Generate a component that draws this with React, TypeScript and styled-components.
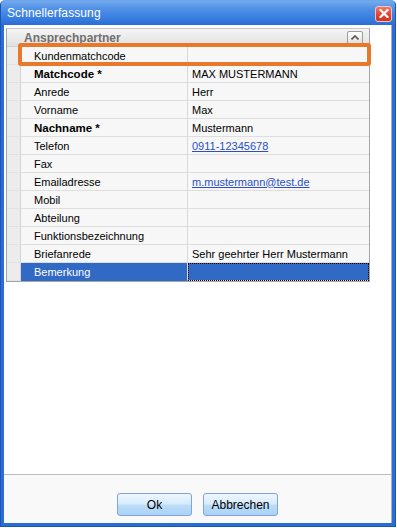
import styled, { createGlobalStyle } from 'styled-components'

const GlobalStyle = createGlobalStyle`
    html, body {
        margin: 0;
        padding: 0;
        background: #ffffff;
    }
    body {
        font-family: 'Liberation Sans', Arial, sans-serif;
    }
`

type Row = {
    label: string
    value?: string
    bold?: boolean
    link?: boolean
    selected?: boolean
}

const rows: Row[] = [
    { label: 'Kundenmatchcode' },
    { label: 'Matchcode *', value: 'MAX MUSTERMANN', bold: true },
    { label: 'Anrede', value: 'Herr' },
    { label: 'Vorname', value: 'Max' },
    { label: 'Nachname *', value: 'Mustermann', bold: true },
    { label: 'Telefon', value: '0911-12345678', link: true },
    { label: 'Fax' },
    { label: 'Emailadresse', value: 'm.mustermann@test.de', link: true },
    { label: 'Mobil' },
    { label: 'Abteilung' },
    { label: 'Funktionsbezeichnung' },
    { label: 'Briefanrede', value: 'Sehr geehrter Herr Mustermann' },
    { label: 'Bemerkung', selected: true },
]

export default function App() {
    return (
        <>
            <GlobalStyle />
            <StyledWindow>
                <StyledTitleBar>
                    <StyledTitle>Schnellerfassung</StyledTitle>
                    <StyledClose>
                        <svg width="10" height="9" viewBox="0 0 10 9">
                            <path d="M1.5 1 L8.5 8 M8.5 1 L1.5 8" stroke="#fff" strokeWidth="2.2" strokeLinecap="square" />
                        </svg>
                    </StyledClose>
                </StyledTitleBar>
                <StyledClient>
                    <StyledContent>
                        <StyledGrid>
                            <StyledGroupHeader>
                                <StyledGroupTitle>Ansprechpartner</StyledGroupTitle>
                                <StyledCollapse>
                                    <svg width="8" height="5" viewBox="0 0 8 5">
                                        <path d="M0.5 4.5 L4 1 L7.5 4.5" stroke="#555" strokeWidth="1.6" fill="none" />
                                    </svg>
                                </StyledCollapse>
                            </StyledGroupHeader>
                            {rows.map((row) => (
                                <StyledRow key={row.label}>
                                    <StyledGutter />
                                    <StyledLabel $bold={row.bold} $selected={row.selected}>{row.label}</StyledLabel>
                                    <StyledValue $selected={row.selected}>
                                        {row.link ? <StyledLink>{row.value}</StyledLink> : row.value}
                                    </StyledValue>
                                </StyledRow>
                            ))}
                            <StyledHighlight />
                        </StyledGrid>
                    </StyledContent>
                    <StyledFooter>
                        <StyledButton>Ok</StyledButton>
                        <StyledButton>Abbrechen</StyledButton>
                    </StyledFooter>
                </StyledClient>
            </StyledWindow>
        </>
    )
}

const StyledWindow = styled.div`
    width: 396px;
    height: 527px;
    box-sizing: border-box;
    display: flex;
    flex-direction: column;
    background: #2a6dd4;
    border: 1px solid #1c56b5;
    border-top-color: #6ea6ec;
    border-radius: 5px 5px 0 0;
`

const StyledTitleBar = styled.div`
    height: 23px;
    flex: none;
    display: flex;
    align-items: center;
    justify-content: space-between;
    padding: 0 3px 0 6px;
    background: linear-gradient(to bottom, #73aaee 0%, #4f90e6 35%, #3a80e0 70%, #2c70d6 100%);
    border-radius: 4px 4px 0 0;
`

const StyledTitle = styled.div`
    color: #fff;
    font-size: 12px;
    letter-spacing: 0.1px;
`

const StyledClose = styled.div`
    width: 15px;
    height: 14px;
    margin-top: 2px;
    display: flex;
    align-items: center;
    justify-content: center;
    border: 1px solid #f3c3bd;
    border-radius: 3px;
    background: linear-gradient(to bottom, #ef7a6e 0%, #e2483a 50%, #d4321f 100%);
`

const StyledClient = styled.div`
    flex: 1;
    display: flex;
    flex-direction: column;
    margin: 1px 3px 3px 3px;
    background: #fff;
    border-right: 1px solid #b0b0b0;
`

const StyledContent = styled.div`
    flex: 1;
    padding: 3px 21px 0 2px;
`

const StyledGrid = styled.div`
    position: relative;
    border: 1px solid #a5a5a5;
    border-top-color: #c8c8c8;
    background: #f7f7f7;
`

const StyledGroupHeader = styled.div`
    height: 17px;
    display: flex;
    align-items: center;
    justify-content: space-between;
    padding: 0 6px 0 17px;
    background: linear-gradient(to bottom, #f4f4f4 0%, #e9e9e9 60%, #e0e0e0 100%);
    border-bottom: 1px solid #d0d0d0;
`

const StyledGroupTitle = styled.div`
    color: #707070;
    font-size: 12px;
    font-weight: bold;
`

const StyledCollapse = styled.div`
    width: 14px;
    height: 12px;
    display: flex;
    align-items: center;
    justify-content: center;
    border: 1px solid #9c9c9c;
    border-radius: 2px;
    background: linear-gradient(to bottom, #ffffff, #dedede);
`

const StyledRow = styled.div`
    display: grid;
    grid-template-columns: 14px 167px 1fr;
    height: 18px;
`

const StyledGutter = styled.div`
    background: #ececec;
    border-right: 1px solid #d4d4d4;
    border-bottom: 1px solid #e2e2e2;
`

const StyledLabel = styled.div<{ $bold?: boolean; $selected?: boolean }>`
    display: flex;
    align-items: center;
    padding-left: 13px;
    font-size: ${(p) => (p.$bold ? '11.5px' : '11px')};
    font-weight: ${(p) => (p.$bold ? 'bold' : 'normal')};
    color: ${(p) => (p.$selected ? '#fff' : '#000')};
    background: ${(p) => (p.$selected ? '#316ac5' : '#f7f7f7')};
    border-right: 1px solid #dadada;
    border-bottom: 1px solid ${(p) => (p.$selected ? '#316ac5' : '#dedede')};
    white-space: nowrap;
`

const StyledValue = styled.div<{ $selected?: boolean }>`
    display: flex;
    align-items: center;
    padding-left: 4px;
    font-size: 11px;
    color: #000;
    background: ${(p) => (p.$selected ? '#316ac5' : '#f7f7f7')};
    border-bottom: 1px solid #dedede;
    outline: ${(p) => (p.$selected ? '1px dotted #000' : 'none')};
    outline-offset: -1px;
    white-space: nowrap;
`

const StyledLink = styled.span`
    color: #2b4fc6;
    text-decoration: underline;
`

const StyledHighlight = styled.div`
    position: absolute;
    left: 11px;
    top: 14px;
    width: 353px;
    height: 23px;
    box-sizing: border-box;
    border: 4px solid #e8782a;
    border-radius: 3px;
    pointer-events: none;
`

const StyledFooter = styled.div`
    height: 49px;
    flex: none;
    display: flex;
    align-items: flex-end;
    justify-content: center;
    gap: 11px;
    padding-bottom: 7px;
    box-sizing: border-box;
    background: #f9f9f9;
    border-top: 1px solid #bdbdbd;
`

const StyledButton = styled.button`
    width: 75px;
    height: 23px;
    padding: 0;
    font-family: 'Liberation Sans', Arial, sans-serif;
    font-size: 12px;
    color: #000;
    border: 1px solid #7fa6d6;
    border-radius: 3px;
    background: linear-gradient(to bottom, #eef6fe 0%, #d8ecfc 45%, #bcdcf8 55%, #a9d2f6 100%);
`
